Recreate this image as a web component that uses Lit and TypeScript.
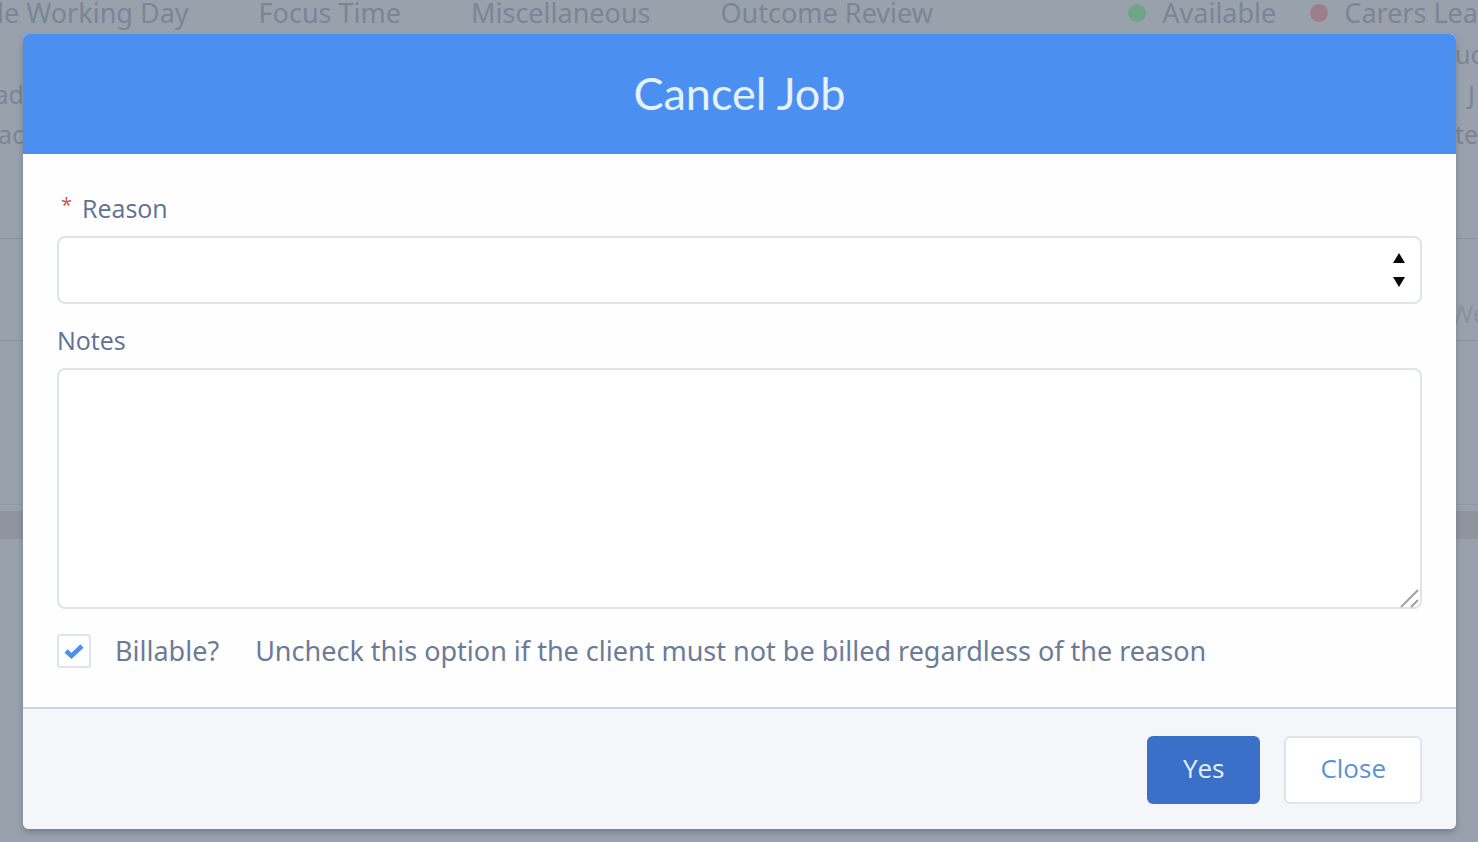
import { LitElement, html, css } from "lit";
import { customElement, state } from "lit/decorators.js";

@customElement("schedule-backdrop")
class ScheduleBackdrop extends LitElement {
  static styles = css`
    :host {
      display: block;
      color: #7b8593;
      font-family: "Noto Sans", "Open Sans", sans-serif;
      font-size: 27px;
      line-height: 40px;
      white-space: nowrap;
    }
    .legend {
      display: flex;
      gap: 70px;
      height: 34px;
      margin-left: -3px;
      line-height: 26px;
    }
    .states {
      display: flex;
      gap: 34px;
      margin-left: auto;
    }
    .state {
      display: flex;
      align-items: center;
      gap: 16px;
      height: 26px;
    }
    .dot {
      width: 18px;
      height: 18px;
      border-radius: 50%;
      background: #6fa588;
    }
    .dot.leave {
      background: #9c7f8b;
    }
    .row {
      display: flex;
      justify-content: space-between;
      height: 40px;
      font-size: 25px;
    }
    .row > * {
      display: flex;
      justify-content: flex-end;
      width: 24px;
    }
    .row > :last-child {
      justify-content: flex-start;
      width: 23px;
    }
    .row > .inset {
      width: 10px;
    }
    .grid {
      margin-top: 84px;
      border-top: 1px solid #8a949f;
      border-bottom: 1px solid #8a949f;
      height: 101px;
    }
    .cell {
      display: flex;
      justify-content: flex-end;
      padding-top: 54px;
      color: #89929d;
      font-size: 25px;
    }
    .cell span {
      width: 28px;
    }
    .track {
      height: 163px;
      border-bottom: 1px solid #8f98a3;
    }
    .scroll {
      margin-top: 6px;
      height: 28px;
      background: #8e959e;
    }
  `;

  render() {
    return html`
      <div class="legend">
        <span>le Working Day</span>
        <span>Focus Time</span>
        <span>Miscellaneous</span>
        <span>Outcome Review</span>
        <div class="states">
          <span class="state"><i class="dot"></i>Available</span>
          <span class="state"><i class="dot leave"></i>Carers Lea</span>
        </div>
      </div>
      <div class="row"><span></span><span>uc</span></div>
      <div class="row"><span>ad</span><span class="inset">J</span></div>
      <div class="row"><span>ac</span><span>te</span></div>
      <div class="grid"><div class="cell"><span>We</span></div></div>
      <div class="track"></div>
      <div class="scroll"></div>
    `;
  }
}

@customElement("cancel-job-dialog")
class CancelJobDialog extends LitElement {
  @state() private billable = true;

  static styles = css`
    :host {
      display: block;
    }
    * {
      box-sizing: border-box;
    }
    .dialog {
      border-radius: 6px;
      background: #fefefe;
      box-shadow: 0 4px 6px rgba(60, 75, 90, 0.35);
      color: #54698d;
    }
    header {
      padding: 31px 32px 33px;
      border-radius: 6px 6px 0 0;
      background: #4b8ff1;
    }
    h1 {
      margin: 0;
      color: #e6f1ff;
      font-family: Lato, "Open Sans", sans-serif;
      font-size: 45px;
      font-weight: 400;
      line-height: 56px;
      text-align: center;
    }
    .body {
      padding: 34px 34px 38px;
    }
    .label {
      display: block;
      padding-bottom: 8px;
      color: #5f7194;
      font-size: 25px;
      line-height: 40px;
    }
    .required {
      margin: 0 10px 0 4px;
      color: #c9574b;
      font-size: 20px;
      line-height: 28px;
      vertical-align: text-top;
    }
    .field {
      position: relative;
      display: flex;
      margin-bottom: 16px;
    }
    select,
    textarea {
      width: 100%;
      margin: 0;
      padding: 12px 24px;
      border: 2px solid #dfe3eb;
      border-radius: 8px;
      background: #ffffff;
      color: inherit;
      font: inherit;
      font-size: 27px;
      appearance: none;
      resize: none;
    }
    select {
      height: 68px;
    }
    textarea {
      height: 241px;
    }
    .arrows,
    .grip {
      position: absolute;
      pointer-events: none;
    }
    .arrows {
      top: 16px;
      right: 16px;
    }
    .grip {
      right: 2px;
      bottom: 0;
    }
    .billable {
      display: flex;
      align-items: center;
      gap: 36px;
      padding-top: 8px;
      color: #6b7b98;
      font-family: "Noto Sans", "Open Sans", sans-serif;
      font-size: 27px;
      line-height: 36px;
    }
    .option {
      display: flex;
      align-items: center;
      gap: 24px;
    }
    .tick {
      position: relative;
      display: flex;
    }
    .tick input {
      width: 34px;
      height: 34px;
      margin: 0;
      border: 2px solid #dfe3eb;
      border-radius: 3px;
      background: #ffffff;
      appearance: none;
    }
    .tick svg {
      position: absolute;
      inset: 0;
      pointer-events: none;
    }
    footer {
      display: flex;
      justify-content: flex-end;
      gap: 24px;
      padding: 27px 34px 25px;
      border-top: 2px solid #cfd6de;
      border-radius: 0 0 6px 6px;
      background: #f4f6f9;
    }
    button {
      height: 68px;
      padding: 0 34px 4px;
      border: 2px solid #dfe3eb;
      border-radius: 6px;
      background: #ffffff;
      color: #5a94d6;
      font: inherit;
      font-size: 26px;
    }
    .primary {
      border-color: #3a70c7;
      background: #3a70c7;
      color: #e6f0fc;
    }
  `;

  private toggle(e: Event) {
    this.billable = (e.target as HTMLInputElement).checked;
  }

  render() {
    return html`
      <section class="dialog" role="dialog" aria-labelledby="title">
        <header><h1 id="title">Cancel Job</h1></header>
        <div class="body">
          <label class="label" for="reason"><span class="required">*</span>Reason</label>
          <div class="field">
            <select id="reason"><option></option></select>
            <svg class="arrows" width="14" height="36" viewBox="0 0 14 36" aria-hidden="true">
              <path d="M7 1 13 11H1Z M1 25H13L7 35Z" fill="#080810" />
            </svg>
          </div>
          <label class="label" for="notes">Notes</label>
          <div class="field">
            <textarea id="notes"></textarea>
            <svg class="grip" width="20" height="22" viewBox="0 0 20 22" aria-hidden="true">
              <path d="M1 20 18 3M11 20 18 13" stroke="#a0a0a0" stroke-width="2" fill="none" />
            </svg>
          </div>
          <div class="billable">
            <label class="option">
              <span class="tick">
                <input type="checkbox" .checked=${this.billable} @change=${this.toggle} />
                ${this.billable
                  ? html`<svg width="34" height="34" viewBox="0 0 34 34" aria-hidden="true">
                      <path d="M9 17 14.500 22 25 12" stroke="#4a90ee" stroke-width="4.500" fill="none" />
                    </svg>`
                  : null}
              </span>
              Billable?
            </label>
            <span>Uncheck this option if the client must not be billed regardless of the reason</span>
          </div>
        </div>
        <footer>
          <button class="primary" type="button">Yes</button>
          <button type="button">Close</button>
        </footer>
      </section>
    `;
  }
}

@customElement("app-root")
class AppRoot extends LitElement {
  static styles = css`
    :host {
      position: relative;
      display: block;
      height: 100vh;
      overflow: hidden;
      background: #99a2ac;
      font-family: "Open Sans", "Noto Sans", sans-serif;
    }
    .modal {
      position: absolute;
      inset: 0;
      padding: 34px 22px 0 23px;
    }
  `;

  render() {
    return html`
      <schedule-backdrop></schedule-backdrop>
      <div class="modal"><cancel-job-dialog></cancel-job-dialog></div>
    `;
  }
}
